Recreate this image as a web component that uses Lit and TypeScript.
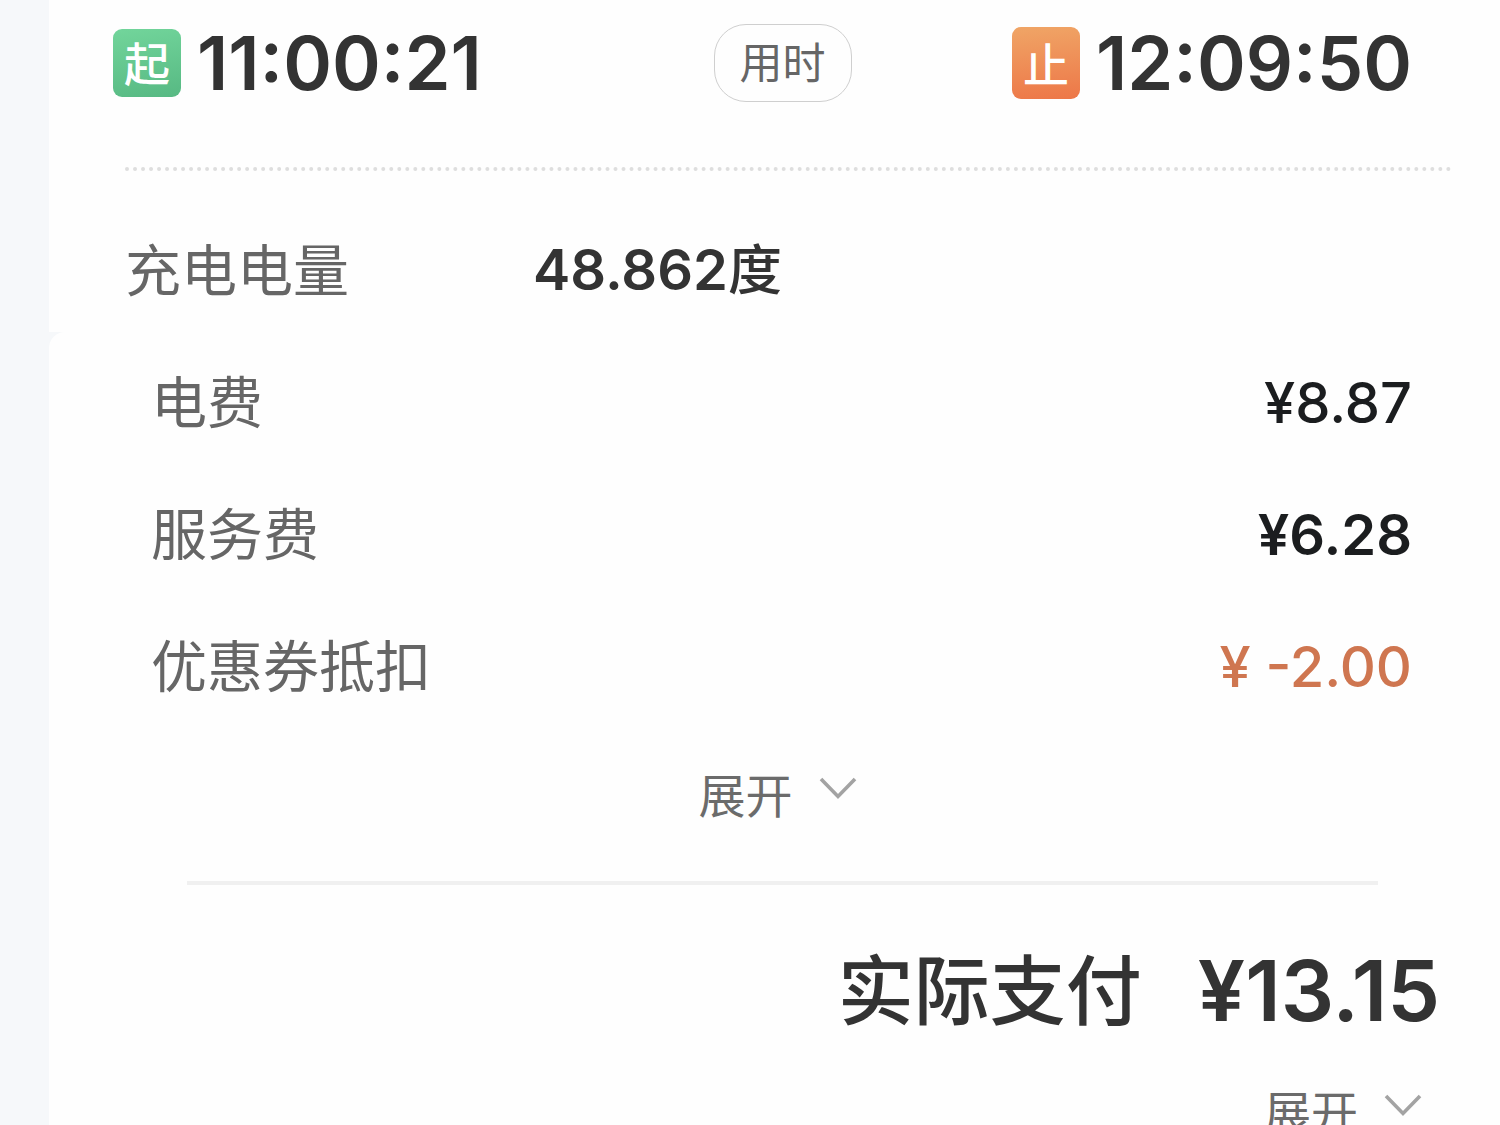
import { LitElement, html, css } from "lit";
import { customElement, property } from "lit/decorators.js";

interface Fee {
  label: string;
  amount: string;
  tone: "regular" | "strong" | "discount";
}

@customElement("expand-button")
class ExpandButton extends LitElement {
  static styles = css`
    :host {
      display: block;
    }
    .expand {
      display: flex;
      align-items: center;
      gap: 24px;
      margin: 0;
      padding: 0;
      border: 0;
      background: none;
      color: #6b6b6b;
      font: inherit;
      font-size: 47px;
      line-height: 64px;
      cursor: pointer;
    }
    .chevron {
      display: block;
      width: 42px;
      height: 28px;
      margin-bottom: 16px;
    }
  `;

  render() {
    return html`
      <button class="expand" type="button">
        <span>展开</span>
        <svg class="chevron" viewBox="0 0 42 28" aria-hidden="true">
          <path d="M4 5 L21 22.5 L38 5" fill="none" stroke="#a3a3a3" stroke-width="3.6" />
        </svg>
      </button>
    `;
  }
}

@customElement("time-stamp")
class TimeStamp extends LitElement {
  @property() kind = "start";
  @property() mark = "";
  @property() time = "";

  static styles = css`
    :host {
      display: block;
    }
    .stamp {
      display: flex;
      align-items: center;
      gap: 16px;
    }
    .mark {
      width: 68px;
      padding-top: 2px;
      border-radius: 9px;
      color: #fff;
      font-size: 46px;
      font-weight: 500;
      line-height: 66px;
      text-align: center;
    }
    .start {
      background: linear-gradient(170deg, #72d59b, #57b983);
    }
    .end {
      padding-top: 4px;
      background: linear-gradient(175deg, #f0a566, #ed7748);
      line-height: 68px;
    }
    .time {
      color: #333;
      font-size: 74px;
      font-weight: 600;
      line-height: 96px;
    }
  `;

  render() {
    return html`
      <div class="stamp">
        <span class="mark ${this.kind}">${this.mark}</span>
        <time class="time">${this.time}</time>
      </div>
    `;
  }
}

@customElement("app-root")
class AppRoot extends LitElement {
  private fees: Fee[] = [
    { label: "电费", amount: "¥8.87", tone: "regular" },
    { label: "服务费", amount: "¥6.28", tone: "strong" },
    { label: "优惠券抵扣", amount: "¥ -2.00", tone: "discount" },
  ];

  static styles = css`
    :host {
      display: block;
      box-sizing: border-box;
      height: 100vh;
      overflow: hidden;
      padding-left: 49px;
      background: #f6f8fa;
      font-family: Inter, "Noto Sans CJK SC", sans-serif;
    }
    .session {
      padding-left: 64px;
      padding-right: 48px;
      background: #fefefe;
    }
    .times {
      display: grid;
      grid-template-columns: 1fr auto 1fr;
      align-items: center;
      height: 126px;
    }
    .finish {
      justify-self: end;
      padding-right: 40px;
    }
    .tag {
      padding: 0 25px;
      border: 1px solid #cfcfcf;
      border-radius: 32px;
      color: #666;
      font-size: 43px;
      line-height: 76px;
    }
    .dots {
      margin: 41px 0 0 12px;
      border: 0;
      border-top: 4px dotted #dedede;
    }
    .energy {
      display: grid;
      grid-template-columns: 408px 1fr;
      align-items: center;
      margin: 0;
      padding: 59px 0 21px 12px;
      line-height: 80px;
    }
    .label {
      color: #666;
      font-size: 56px;
    }
    .value {
      margin: 0;
      color: #333;
      font-size: 56px;
      font-weight: 600;
    }
    .unit {
      font-size: 54px;
      font-weight: 500;
    }
    .bill {
      padding: 5px 60px 0 102px;
      border-top-left-radius: 16px;
      background: #fefefe;
    }
    .fees {
      margin: 0;
    }
    .fee {
      display: flex;
      align-items: center;
      justify-content: space-between;
      padding-right: 28px;
      line-height: 132px;
    }
    .amount {
      margin: 0;
      font-size: 56px;
    }
    .regular {
      color: #1b1d1f;
      font-weight: 500;
    }
    .strong {
      color: #1b1d1f;
      font-weight: 600;
    }
    .discount {
      color: #cf7650;
      font-weight: 500;
    }
    .more {
      display: flex;
      justify-content: center;
      padding: 31px 34px 53px 0;
    }
    .rule {
      margin: 0 62px 0 36px;
      border: 0;
      border-top: 4px solid #f0f0f0;
    }
    .total {
      display: flex;
      align-items: center;
      justify-content: flex-end;
      gap: 56px;
      color: #333;
      font-size: 76px;
      font-weight: 500;
      line-height: 112px;
      padding: 50px 0 34px;
    }
    .sum {
      font-size: 84px;
      font-weight: 600;
    }
    .details {
      display: flex;
      justify-content: flex-end;
      padding-right: 16px;
    }
  `;

  render() {
    return html`
      <section class="session">
        <div class="times">
          <time-stamp kind="start" mark="起" time="11:00:21"></time-stamp>
          <span class="tag">用时</span>
          <time-stamp class="finish" kind="end" mark="止" time="12:09:50"></time-stamp>
        </div>
        <hr class="dots" />
        <dl class="energy">
          <dt class="label">充电电量</dt>
          <dd class="value">48.862<span class="unit">度</span></dd>
        </dl>
      </section>
      <section class="bill">
        <dl class="fees">
          ${this.fees.map(
            (fee) => html`
              <div class="fee">
                <dt class="label">${fee.label}</dt>
                <dd class="amount ${fee.tone}">${fee.amount}</dd>
              </div>
            `
          )}
        </dl>
        <div class="more"><expand-button></expand-button></div>
        <hr class="rule" />
        <div class="total">
          <span>实际支付</span>
          <strong class="sum">¥13.15</strong>
        </div>
        <div class="details"><expand-button></expand-button></div>
      </section>
    `;
  }
}
